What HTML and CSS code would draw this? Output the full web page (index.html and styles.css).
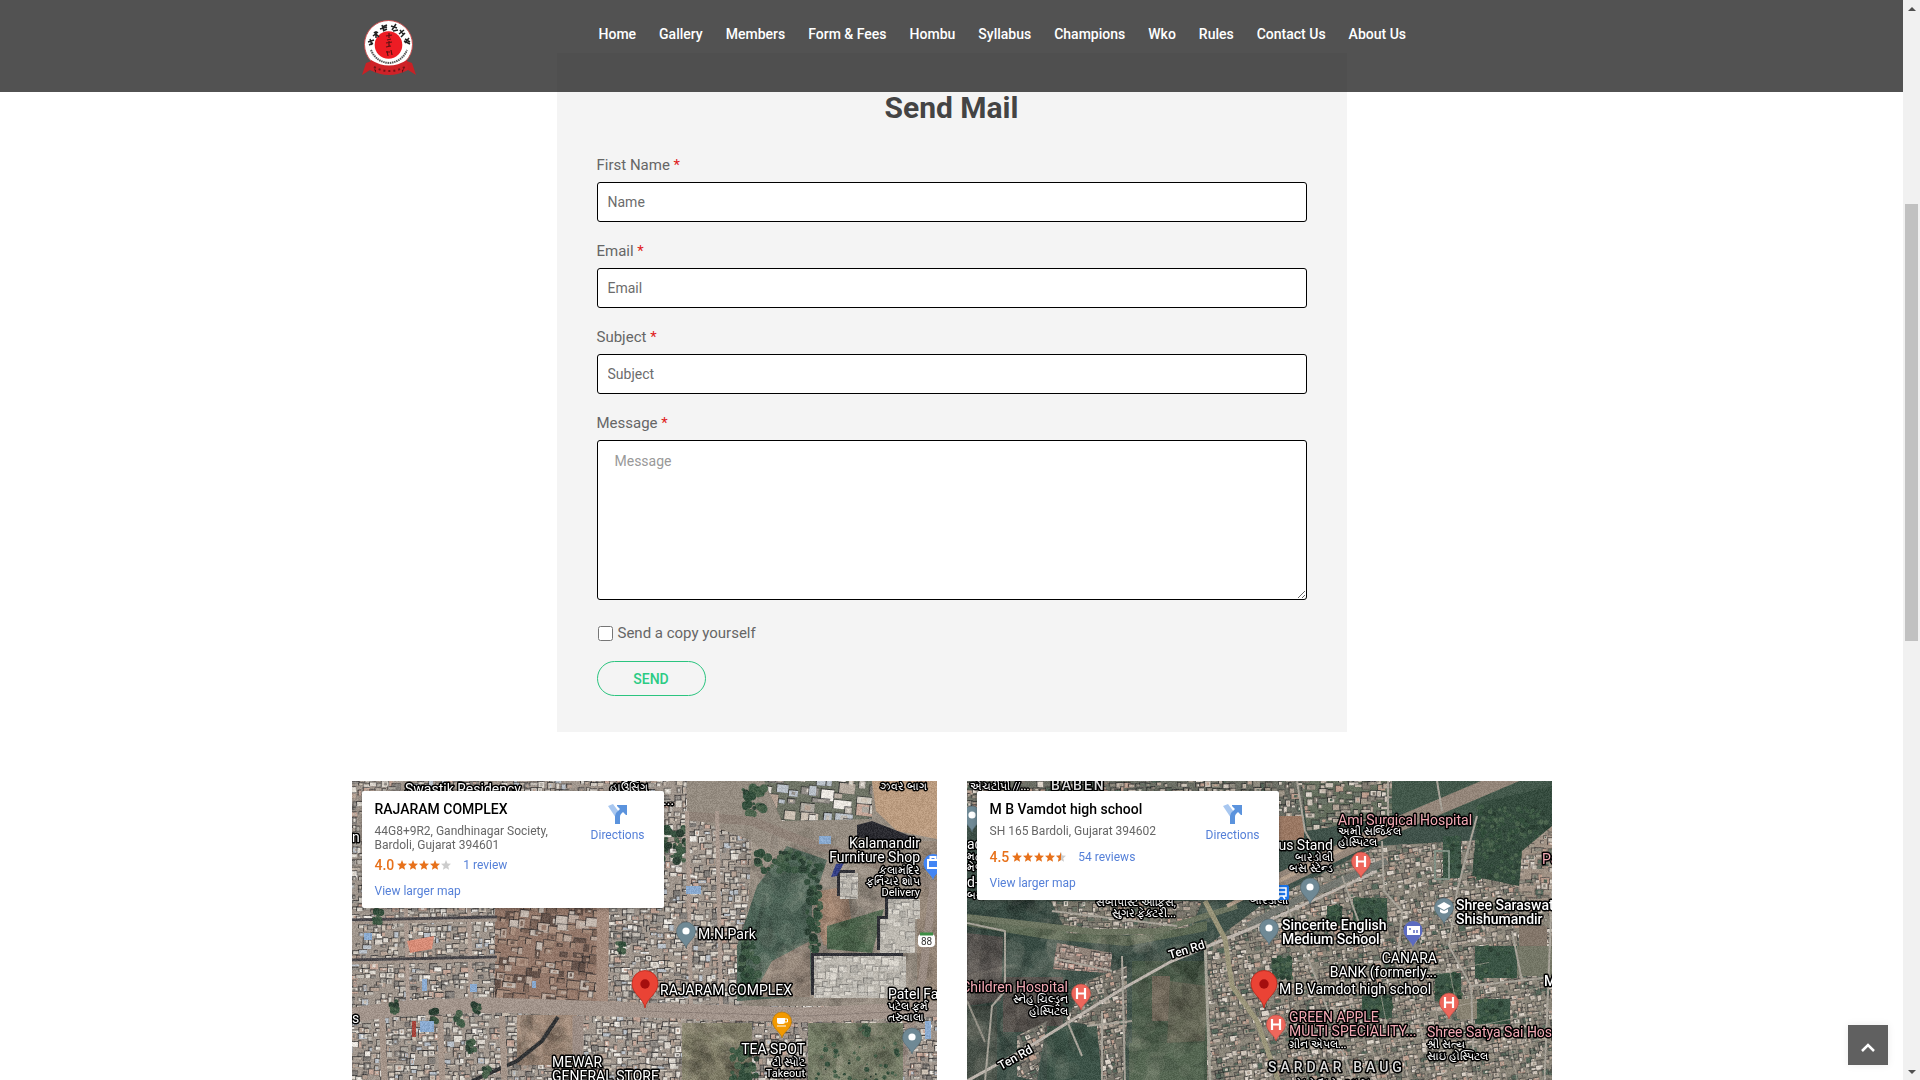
FILE: index.html
```html
<!DOCTYPE html>
<html lang="en">
<head>
<meta charset="utf-8">
<meta name="viewport" content="width=device-width, initial-scale=1">
<title>Contact Us</title>
<link rel="stylesheet" href="styles.css">
</head>
<body>
<svg class="defs" aria-hidden="true">
  <defs>
    <path id="drop" d="M0 0C-1.500-6-9.500-9.500-9.500-16.500A9.500 9.500 0 0 1 9.500-16.500C9.500-9.500 1.500-6 0 0Z"/>
    <g id="pin-dot"><use href="#drop" fill="#6f8995" stroke="#51646d" stroke-width=".6"/><circle cy="-17" r="3.600" fill="#fff"/></g>
    <g id="pin-hospital"><use href="#drop" fill="#ee675c" stroke="#b8463d" stroke-width=".6"/><path d="M-4-22V-11M4-22V-11M-4-16.500H4" stroke="#fff" stroke-width="2.200"/></g>
    <g id="pin-main"><path d="M0 0C-1.500-10-13-14-13-24.500A13 13 0 0 1 13-24.500C13-14 1.500-10 0 0Z" fill="#ea4335" stroke="#b9281c" stroke-width=".8"/><circle cy="-24" r="4.700" fill="#a50e0e"/></g>
    <path id="star" d="M5 0L6.400 3.500L10 3.800L7.200 6.200L8.100 9.800L5 7.900L1.900 9.800L2.800 6.200L0 3.800L3.600 3.500Z"/>
    <g id="directions"><path d="M0 2L5 0L11 8L8 14Z" fill="#a8c7f0"/><path d="M7 20V12Q7 9 10 7L12 5L9 2V1H19V11H18L15 8L13 10Q12 11 12 13V20Z" fill="#5b93dd"/></g>
  </defs>
</svg>
<div class="window">
  <div class="page">
    <header class="site-header">
      <div class="header-inner">
        <a class="logo" href="#" aria-label="Karate club home">
          <svg width="54" height="60" viewBox="0 0 54 60">
            <path d="M0 57L4 45L15 41L15 53L8 52Z M54 57L50 45L39 41L39 53L46 52Z" fill="#c92125"/>
            <circle cx="26.500" cy="26.500" r="24" fill="#fff" stroke="#c94c4c" stroke-width="1"/>
            <circle cx="26.500" cy="27" r="13.800" fill="#ed1c24"/>
            <path d="M9 42Q27 53 45 42L46 52Q27 62 8 52Z" fill="#cf2228"/>
            <path d="M27 15V20M24 18L30 17M25 22L29 21M24 25L30 24M27 23V29M24 29L29 28M25 33L26 38M29 32L30 37M24 34H28" stroke="#5c1212" stroke-width="1.200" fill="none"/>
            <path d="M6 24L12 22M8 21L10 27M7 27L11 25M12 14L17 19M11 18L16 14M14 13L14 20M20 7L22 13M18 11L25 9M20 9L25 7M21 13L25 11M29 8L35 10M30 12L34 6M31 13L36 12M38 12L42 17M37 16L42 12M39 19L43 15M43 21L48 24M43 25L47 20M42 23L48 26" stroke="#222" stroke-width="1.500" fill="none"/>
            <path d="M9 32Q14 44 27 45Q40 44 45 32" fill="none" stroke="#555" stroke-width="2" stroke-dasharray="1.500 .7"/>
            <path d="M12 49Q27 57 43 49" fill="none" stroke="#701417" stroke-width="2" stroke-dasharray="2 3"/>
            <path d="M12 51L14 55V52ZM42 51L40 55V52Z" fill="#5a0f11"/>
          </svg>
        </a>
        <nav class="menu" aria-label="Main">
          <a href="#">Home</a><a href="#">Gallery</a><a href="#">Members</a><a href="#">Form &amp; Fees</a><a href="#">Hombu</a><a href="#">Syllabus</a><a href="#">Champions</a><a href="#">Wko</a><a href="#">Rules</a><a href="#">Contact Us</a><a href="#">About Us</a>
        </nav>
      </div>
    </header>
    <main>
      <form class="mail-form">
        <h2>Send Mail</h2>
        <div class="field"><label for="name">First Name <span class="req">*</span></label><input id="name" type="text" placeholder="Name"></div>
        <div class="field"><label for="email">Email <span class="req">*</span></label><input id="email" type="email" placeholder="Email"></div>
        <div class="field"><label for="subject">Subject <span class="req">*</span></label><input id="subject" type="text" placeholder="Subject"></div>
        <div class="field"><label for="message">Message <span class="req">*</span></label><textarea id="message" placeholder="Message"></textarea></div>
        <div class="copy"><input id="copy" type="checkbox"><label for="copy">Send a copy yourself</label></div>
        <button class="send" type="button">SEND</button>
      </form>
      <div class="maps">
        <section class="map" aria-label="Rajaram Complex map">
          <canvas class="terrain" id="town" width="585" height="450"></canvas>
          <svg class="labels" viewBox="0 0 585 450" preserveAspectRatio="xMidYMin slice">
            <text x="53" y="13">Swastik Residency</text>
            <text class="local" x="258" y="10">હાઉસિંગ</text>
            <text x="311" y="24">...</text>
            <text class="local end" x="575" y="9">ઝવર બાગ</text>
            <text x="0" y="61">n</text><text x="0" y="242">s</text>
            <text class="end" x="568" y="67">Kalamandir</text>
            <text class="end" x="568" y="81">Furniture Shop</text>
            <text class="local end" x="568" y="93">કલામંદિર</text>
            <text class="local end" x="568" y="104">ફર્નિચર શોપ</text>
            <text class="local end" x="568" y="115">Delivery</text>
            <text x="346" y="158">M.N.Park</text>
            <text x="308" y="214">RAJARAM COMPLEX</text>
            <text x="536" y="218">Patel Farm</text>
            <text class="local" x="536" y="229">પટેલ ફર્મ</text>
            <text class="local" x="536" y="240">તરુવાલા</text>
            <text class="end" x="453" y="273">TEA SPOT</text>
            <text class="local end" x="453" y="285">ટી સ્પોટ</text>
            <text class="local end" x="453" y="296">Takeout</text>
            <text x="200" y="286">MEWAR</text><text x="200" y="300">GENERAL STORE</text>
            <use href="#pin-dot" x="334" y="167"/><use href="#pin-dot" x="560" y="273"/>
            <g transform="translate(581 99)"><use href="#drop" fill="#4285f4"/><path d="M-5-20H5V-12H-5ZM-2.500-20V-23H2.500V-20" fill="none" stroke="#fff" stroke-width="2"/></g>
            <g transform="translate(430 257)"><use href="#drop" fill="#f29900" stroke="#ad7008" stroke-width=".6"/><path d="M-5-20H3V-16Q3-14 1-14H-3Q-5-14-5-16Z" fill="#fff"/><path d="M3-19H5.500V-16H3M-5-12H4" fill="none" stroke="#fff"/></g>
            <rect x="566" y="153" width="17" height="13" rx="4" fill="#fff"/><path d="M568 153H581" stroke="#3c8d45" stroke-width="3"/>
            <text class="route" x="569" y="164">88</text>
            <use href="#pin-main" x="293" y="227"/>
          </svg>
          <div class="place">
            <div class="place-info"><h3>RAJARAM COMPLEX</h3><p>44G8+9R2, Gandhinagar Society,<br>Bardoli, Gujarat 394601</p>
              <div class="rating"><span>4.0</span><svg width="56" height="10" viewBox="0 0 56 10" fill="#e7711b"><use href="#star"/><use href="#star" x="11"/><use href="#star" x="22"/><use href="#star" x="33"/><use href="#star" x="44" fill="#ccc"/></svg><a href="#">1 review</a></div>
              <a class="larger" href="#">View larger map</a></div>
            <a class="directions" href="#"><svg width="20" height="20" viewBox="0 0 20 20"><use href="#directions"/></svg>Directions</a>
          </div>
        </section>
        <section class="map" aria-label="M B Vamdot high school map">
          <canvas class="terrain" id="fields" width="585" height="450"></canvas>
          <svg class="labels" viewBox="0 0 585 450" preserveAspectRatio="xMidYMin slice">
            <text class="local" x="3" y="9">એચટીપી //...</text>
            <text class="area" x="84" y="9">BABEN</text>
            <use href="#pin-dot" x="5" y="51"/>
            <text x="0" y="68">ad</text><text class="local" x="0" y="79">મહ</text><text class="local" x="0" y="90">મેળ</text><text x="0" y="106">d-</text><text class="local" x="0" y="118">બસ</text>
            <text class="local end" x="209" y="125">સબીપીસ્ટ ઓફિસ,</text>
            <text class="local end" x="209" y="136">સુગર ફેક્ટરી...</text>
            <text class="road" transform="translate(203 178) rotate(-17)">Ten Rd</text>
            <text class="road" transform="translate(34 289) rotate(-29)">Ten Rd</text>
            <text class="pink end" x="101" y="211">Children Hospital</text>
            <text class="local end" x="101" y="222">સ્નેહ ચિલ્ડ્રન</text>
            <text class="local end" x="101" y="234">હોસ્પિટલ</text>
            <text class="pink" x="371" y="44">Ami Surgical Hospital</text>
            <text class="local" x="371" y="54">અમી સર્જિકલ</text>
            <text class="local" x="371" y="65">હોસ્પિટલ</text>
            <text class="end" x="366" y="69">Bus Stand</text>
            <text class="local end" x="366" y="80">બારડોલી</text>
            <text class="local end" x="366" y="91">બસ સ્ટેન્ડ</text>
            <text class="local" x="283" y="123">બારડોલી</text>
            <text class="pink" x="575" y="83">Pa</text>
            <text class="strong" x="489" y="129">Shree Saraswati</text><text class="strong" x="489" y="143">Shishumandir</text>
            <text class="strong" x="315" y="149">Sincerite English</text><text class="strong" x="315" y="163">Medium School</text>
            <text class="end" x="470" y="182">CANARA</text><text class="end" x="470" y="196">BANK (formerly...</text>
            <text x="312" y="213">M B Vamdot high school</text>
            <text class="pink" x="322" y="241">GREEN APPLE</text><text class="pink" x="322" y="255">MULTI SPECIALITY...</text>
            <text class="local" x="322" y="267">ગ્રીન એપલ...</text>
            <text class="pink" x="460" y="256">Shree Satya Sai Hospital</text>
            <text class="local" x="460" y="267">શ્રી સત્ય</text><text class="local" x="460" y="279">સાઇ હોસ્પિટલ</text>
            <text class="strong" x="577" y="205">Mo</text>
            <text class="area wide" x="301" y="291">SARDAR BAUG</text>
            <text class="area" x="328" y="307">સરદાર બાગ</text>
            <rect x="305" y="104" width="17" height="15" rx="2" fill="#1a73e8"/><path d="M310 107H319V115H310ZM310 111H319M311 118L313 115M318 118L316 115" fill="none" stroke="#fff" stroke-width="1.500"/>
            <use href="#pin-dot" x="343" y="123"/><use href="#pin-dot" x="302" y="164"/>
            <use href="#pin-hospital" x="394" y="97"/><use href="#pin-hospital" x="114" y="229"/><use href="#pin-hospital" x="309" y="260"/><use href="#pin-hospital" x="482" y="238"/>
            <g transform="translate(477 143)"><use href="#drop" fill="#6f8995" stroke="#51646d" stroke-width=".6"/><path d="M-7-18L0-22L7-18L0-14ZM-4-15V-12Q0-9 4-12V-15L0-13Z" fill="#fff"/></g>
            <g transform="translate(446 166)"><use href="#drop" fill="#5c6bc0"/><path d="M-6-21H7V-12H-6Z" fill="#fff"/><path d="M-4-18H-2M1-17V-14M4-17V-14" stroke="#5c6bc0" stroke-width="1.500"/></g>
            <use href="#pin-main" x="297" y="227"/>
          </svg>
          <div class="place">
            <div class="place-info"><h3>M B Vamdot high school</h3><p class="single">SH 165 Bardoli, Gujarat 394602</p>
              <div class="rating"><span>4.5</span><svg width="56" height="10" viewBox="0 0 56 10" fill="#e7711b"><use href="#star"/><use href="#star" x="11"/><use href="#star" x="22"/><use href="#star" x="33"/><use href="#star" x="44" fill="#ccc"/><path d="M49 0V7.900L45.900 9.800L46.800 6.200L44 3.800L47.600 3.500Z"/></svg><a href="#">54 reviews</a></div>
              <a class="larger" href="#">View larger map</a></div>
            <a class="directions" href="#"><svg width="20" height="20" viewBox="0 0 20 20"><use href="#directions"/></svg>Directions</a>
          </div>
        </section>
      </div>
    </main>
    <button class="to-top" type="button" aria-label="Back to top"><svg width="14" height="10" viewBox="0 0 14 10"><path d="M1 8L7 2L13 8" fill="none" stroke="#fff" stroke-width="2.500"/></svg></button>
  </div>
  <div class="scrollbar" aria-hidden="true"><i class="arrow up"></i><i class="thumb"></i><i class="arrow down"></i></div>
</div>
<script src="terrain.js"></script>
</body>
</html>
```
FILE: styles.css
```css
* { box-sizing: border-box; }
body { margin: 0; font-family: Roboto, "Noto Sans", sans-serif; color: #666; background: #fff; }
h2, h3, p { margin: 0; }
a { text-decoration: none; }
input, textarea, button { font-family: inherit; }
.defs { display: block; width: 0; height: 0; }
.window { display: grid; grid-template-columns: minmax(0, 1fr) 17px; height: 100vh; }
.page { position: relative; overflow: hidden; }

.site-header { position: absolute; z-index: 5; top: 0; left: 0; right: 0; height: 92px; background: rgba(24, 24, 24, .75); }
.header-inner { display: flex; align-items: flex-start; max-width: 1200px; margin: 0 auto; }
.logo { margin: 18px 183px 0 10px; line-height: 0; }
.menu { display: flex; gap: 23px; padding-top: 24px; }
.menu a { color: #fff; font-size: 14px; font-weight: 500; line-height: 20px; white-space: nowrap; }

main { padding-top: 53px; }
.mail-form { max-width: 790px; margin: 0 auto; padding: 40px 40px 36px; background: #f4f4f4; }
.mail-form h2 { margin-bottom: 32px; font-size: 30px; line-height: 30px; font-weight: 700; text-align: center; color: #444; }
.field { margin-bottom: 19px; }
.field label { display: block; margin-bottom: 7px; font-size: 15px; line-height: 20px; }
.req { color: #e02020; }
.field input, .field textarea { display: block; width: 100%; border: 1px solid #000; border-radius: 3px; background: #fff; font-size: 14px; line-height: 20px; }
.field input { height: 40px; padding: 0 10px; }
.field textarea { height: 160px; padding: 10px 17px; resize: vertical; }
.field input::placeholder { color: #6c6c6c; }
.field textarea::placeholder { color: #999; }
.copy { display: flex; align-items: center; gap: 5px; margin: 23px 0 18px; font-size: 15px; line-height: 20px; }
.copy input { width: 15px; height: 15px; margin: 0 0 0 1px; }
.send { display: block; width: 109px; height: 35px; padding: 0; border: 1px solid #2bc47f; border-radius: 18px; background: transparent; color: #2ccb84; font-size: 14px; font-weight: 500; }

.maps { display: grid; grid-template-columns: 1fr 1fr; gap: 30px; max-width: 1200px; margin: 49px auto 0; }
.map { position: relative; height: 450px; overflow: hidden; }
.terrain, .labels { position: absolute; top: 0; left: 0; width: 100%; height: 100%; }
.terrain { object-fit: cover; object-position: top; }
.labels text { fill: #fff; stroke: #000; stroke-width: 3px; stroke-linejoin: round; paint-order: stroke; font-size: 14px; }
.labels .local { font-size: 11px; }
.labels .end { text-anchor: end; }
.labels .pink { fill: #f3a9b4; }
.labels .strong { font-weight: 500; }
.labels .road { font-size: 12px; font-weight: 500; }
.labels .area { font-weight: 500; letter-spacing: 2px; fill: #ddd; }
.labels .wide { letter-spacing: 4px; }
.labels .route { font-size: 10px; stroke: none; fill: #333; }
.place { position: absolute; top: 10px; left: 10px; display: flex; justify-content: space-between; width: 302px; padding: 9px 19px 10px 13px; border-radius: 2px; background: #fff; font-size: 12px; line-height: 14px; box-shadow: 0 1px 4px rgba(0, 0, 0, .3); }
.place h3 { margin-bottom: 6px; font-size: 14px; line-height: 18px; font-weight: 500; color: #000; }
.place p { color: #666; }
.place .single { margin-bottom: 11px; }
.place a { color: #5580d8; }
.rating { display: flex; align-items: center; height: 16px; margin: 5px 0 11px; }
.rating span { font-size: 14px; font-weight: 500; color: #e7711b; margin-right: 3px; }
.rating a { margin-left: 10px; }
.place .larger { display: block; }
.place .directions { display: flex; flex-direction: column; align-items: center; gap: 4px; padding-top: 4px; }

.to-top { position: absolute; z-index: 6; right: 15px; bottom: 15px; display: grid; place-items: center; width: 40px; height: 40px; padding: 6px 0 0; border: 0; background: #606060; box-shadow: 0 0 8px rgba(0, 0, 0, .08); }
.scrollbar { display: grid; grid-template-rows: 17px 187fr 437fr 422fr 17px; justify-items: center; background: #f1f1f1; }
.thumb { grid-row: 3; width: 13px; background: #c1c1c1; }
.arrow { align-self: center; width: 0; height: 0; border: 4px solid transparent; border-top-width: 0; border-bottom: 4px solid #505050; }
.down { grid-row: 5; border-width: 4px 4px 0; border-color: #505050 transparent transparent; }
```
FILE: terrain.js
```js
// Paints the satellite imagery behind the map labels.
let seed = 7;
const rnd = () => (seed = (seed * 16807) % 2147483647) / 2147483647;
const pick = list => list[Math.floor(rnd() * list.length)];
const roofs = ['#d3cdc4', '#c0bab2', '#e0dbd3', '#aaa59d', '#b8ada2', '#938e89', '#cbc0b3', '#827e7a', '#ece8e2', '#b3a093', '#b9c0c8', '#c4a698', '#d8d2ca'];
const brown = ['#96796a', '#a98e7e', '#7d665a', '#b9a79b', '#64524a', '#c3b8af', '#a08676'];
const suburb = ['#bdb2a6', '#a09789', '#cdc4b9', '#8d897e', '#b0a295', '#6a7266', '#dcd4ca', '#7e786f', '#bd9f8f', '#55675a'];

function trace(c, pts) {
  c.beginPath();
  pts.forEach(([x, y], i) => (i ? c.lineTo(x, y) : c.moveTo(x, y)));
}
function area(c, color, pts) {
  trace(c, pts);
  c.closePath();
  c.fillStyle = color;
  c.fill();
}
function road(c, color, width, pts) {
  trace(c, pts);
  c.strokeStyle = color;
  c.lineWidth = width;
  c.lineJoin = 'round';
  c.stroke();
}
function blocks(c, pts, size, palette, ground, angle = 0, shade = 0.45) {
  c.save();
  area(c, ground, pts);
  c.clip();
  c.translate(290, 150);
  c.rotate(angle);
  for (let y = -450; y < 450; y += size) {
    for (let x = -520; x < 520; x += size) {
      if (rnd() < 0.15) continue;
      const w = size * (0.4 + rnd() * 1.1), h = size * (0.3 + rnd() * 0.8);
      const px = x + rnd() * size * 0.6, py = y + rnd() * size * 0.6;
      c.fillStyle = `rgba(36,36,38,${shade + rnd() * 0.3})`;
      c.fillRect(px - 1, py - 1, w + 1, h + 1);
      c.fillStyle = pick(palette);
      c.fillRect(px, py, w, h);
      if (rnd() < 0.5) { c.fillStyle = pick(palette); c.fillRect(px + w * 0.3, py + h * 0.2, w * 0.4, h * 0.5); }
    }
  }
  c.restore();
}
function trees(c, x, y, w, h, n, size = 5) {
  for (let i = 0; i < n; i++) {
    c.fillStyle = pick(['#334e3c', '#3f5a45', '#2c4034', '#4c644e']);
    c.beginPath();
    c.arc(x + rnd() * w, y + rnd() * h, size * (0.3 + rnd() * 0.6), 0, 7);
    c.fill();
  }
}
// Soft light and dark patches, so that open ground is not flat.
function mottle(c, x, y, w, h, n) {
  for (let i = 0; i < n; i++) {
    c.fillStyle = pick(['rgba(255,240,220,.06)', 'rgba(0,0,0,.07)']);
    c.beginPath();
    c.ellipse(x + rnd() * w, y + rnd() * h, 3 + rnd() * 16, 2 + rnd() * 9, rnd() * 3, 0, 7);
    c.fill();
  }
}
function grain(c, amount) {
  const img = c.getImageData(0, 0, 585, 450), d = img.data;
  for (let i = 0; i < d.length; i += 4) {
    const n = (rnd() - 0.5) * amount;
    d[i] += n; d[i + 1] += n; d[i + 2] += n;
  }
  c.putImageData(img, 0, 0);
}
const box = (x, y, w, h) => [[x, y], [x + w, y], [x + w, y + h], [x, y + h]];

const t = document.getElementById('town').getContext('2d');
blocks(t, box(0, 0, 585, 450), 6, roofs, '#a0968d');
blocks(t, box(143, 125, 108, 95), 9, brown, '#94786a', 0.1);
area(t, '#958c81', [[335, 0], [585, 0], [585, 225], [390, 225], [400, 60], [335, 35]]);
blocks(t, [[412, 0], [520, 0], [520, 38], [430, 40]], 12, roofs, '#6f7466', 0.1);
area(t, '#bb9c80', [[520, 0], [585, 0], [585, 58], [545, 50], [524, 30]]);
area(t, '#958678', box(565, 60, 20, 160));
area(t, '#50675a', [[435, 65], [475, 79], [460, 125], [458, 215], [385, 220], [385, 165], [405, 105]]);
area(t, '#8f8175', [[420, 180], [458, 160], [458, 216], [400, 216]]);
area(t, '#a98c78', [[468, 110], [495, 105], [500, 145], [472, 165], [462, 135]]);
area(t, '#4f684f', [[475, 145], [532, 128], [520, 172], [475, 168]]);
mottle(t, 390, 60, 190, 160, 260);
trees(t, 388, 160, 18, 58, 60);
trees(t, 455, 80, 14, 90, 60);
trees(t, 390, 5, 22, 28, 30);
trees(t, 305, 45, 30, 35, 40);
trees(t, 405, 70, 50, 20, 40);
area(t, '#2b2b31', [[505, 44], [520, 40], [566, 58], [566, 68], [505, 56]]);
[[462, 175, 92, 42], [528, 138, 35, 34], [536, 118, 32, 20], [488, 92, 18, 26]].forEach(([x, y, w, h]) => {
  area(t, '#303137', box(x - 3, y - 3, w, h));
  blocks(t, box(x, y, w, h), 7, ['#c4c1ba', '#d0ccc4', '#b0ada6', '#d9d5cd'], '#bdb9b1', 0, 0.1);
});
area(t, '#343f86', [[479, 96], [484, 83], [492, 82], [485, 95]]);
road(t, '#8f8278', 9, [[335, 35], [400, 40], [450, 60], [500, 75], [585, 105]]);
road(t, '#9a8c83', 8, [[582, 100], [570, 200], [545, 300], [520, 450]]);
[52, 115, 335, 365].forEach(x => road(t, '#ab9b91', 4, [[x, 30], [x + 4, 225]]));
[136, 176].forEach(y => { road(t, '#48464a', 3, [[0, y + 3], [145, y]]); road(t, '#a2958b', 3, [[0, y + 6], [145, y + 3]]); });
road(t, '#a48b7d', 12, [[251, 125], [250, 222]]);
area(t, '#89866f', box(330, 242, 70, 62));
area(t, '#788069', box(456, 242, 95, 60));
area(t, '#a08978', box(165, 234, 60, 50));
mottle(t, 330, 242, 70, 60, 80);
mottle(t, 456, 242, 95, 60, 90);
mottle(t, 165, 234, 60, 50, 60);
trees(t, 380, 262, 25, 40, 45);
trees(t, 462, 262, 85, 38, 40, 3);
road(t, '#303234', 4, [[206, 236], [190, 260], [165, 280], [120, 300]]);
road(t, '#9b8c84', 11, [[226, 235], [226, 450]]);
[30, 88, 150].forEach(x => road(t, '#a5958a', 6, [[x, 235], [x + 8, 450]]));
road(t, '#a2948b', 15, [[0, 234], [50, 227], [140, 224], [290, 229], [450, 234], [585, 228]]);
road(t, '#8d8079', 1, [[290, 230], [450, 235], [585, 229]]);
[[22, 130], [265, 160], [38, 220], [78, 230], [102, 232], [120, 222], [115, 260], [130, 285], [508, 244]].forEach(([x, y]) => trees(t, x, y, 8, 12, 12, 4));
area(t, '#d88d78', [[55, 160], [82, 155], [80, 168], [58, 172]]);
area(t, '#a6453c', box(60, 240, 4, 16));
[[12, 152, 8, 7], [70, 198, 5, 12], [118, 203, 7, 8], [68, 240, 14, 11], [180, 200, 4, 7], [334, 105, 15, 8], [467, 55, 12, 8], [573, 240, 6, 18]].forEach(b => area(t, '#8aaad0', box(...b)));
grain(t, 26);

const f = document.getElementById('fields').getContext('2d');
area(f, '#40524a', box(0, 0, 585, 450));
area(f, '#374a42', box(0, 120, 80, 50));
area(f, '#56524f', [[0, 152], [36, 156], [34, 220], [0, 225]]);
area(f, '#524e4a', box(36, 196, 60, 55));
area(f, '#3d5348', box(80, 245, 80, 205));
area(f, '#464f47', box(0, 225, 30, 75));
area(f, '#4b5c4a', box(165, 180, 78, 125));
area(f, '#71695b', box(185, 195, 18, 45));
area(f, '#566753', box(162, 262, 75, 45));
area(f, '#626554', [[203, 200], [240, 205], [238, 260], [200, 262]]);
area(f, '#5d6a55', [[0, 134], [90, 145], [160, 155], [240, 140], [240, 150], [160, 165], [80, 158], [0, 145]]);
mottle(f, 0, 110, 245, 190, 320);
blocks(f, [[240, 165], [300, 120], [410, 65], [585, 55], [585, 450], [240, 450]], 5, suburb, '#8b867a', -0.15, 0.3);
blocks(f, [[84, 120], [235, 120], [225, 145], [175, 154], [100, 152]], 5, suburb, '#7b786c', 0, 0.3);
blocks(f, [[90, 162], [145, 172], [143, 192], [86, 188]], 5, ['#c49e92', '#b4a49a', '#d1c3b8', '#9c877d'], '#92847a', 0.1, 0.3);
blocks(f, [[120, 200], [160, 185], [160, 240], [156, 300], [135, 300], [130, 245], [98, 240]], 5, suburb, '#78756b', -0.2, 0.3);
blocks(f, [[50, 255], [80, 240], [70, 300], [50, 295]], 5, suburb, '#76746c', -0.4, 0.3);
blocks(f, [[0, 0], [340, 0], [330, 70], [0, 30]], 6, suburb, '#6c6f65');
area(f, '#9a7863', box(312, 35, 25, 24));
area(f, '#43584b', [[420, 0], [585, 0], [585, 45], [420, 30]]);
blocks(f, [[335, 0], [425, 0], [425, 35], [340, 50]], 7, suburb, '#66705f');
area(f, '#354b3e', [[512, 22], [585, 5], [585, 62], [552, 105], [505, 95]]);
trees(f, 508, 25, 75, 72, 300, 3);
[[468, 192, 26, 28], [508, 218, 35, 25], [395, 215, 30, 22], [508, 165, 42, 32], [476, 55, 18, 42], [386, 117, 34, 26], [305, 177, 20, 20], [360, 125, 15, 20]].forEach(b => { area(f, '#3b5445', box(...b)); trees(f, ...b, 35, 3); });
area(f, '#83766a', box(552, 145, 28, 22));
area(f, '#888272', box(490, 218, 20, 20));
area(f, '#757767', box(550, 165, 35, 30));
blocks(f, [[555, 70], [585, 45], [585, 135], [552, 110]], 6, suburb, '#a09285', 0, 0.3);
road(f, '#6d7561', 6, [[0, 136], [130, 151], [190, 150], [270, 125]]);
road(f, '#94867a', 15, [[280, 115], [420, 48], [585, -22]]);
road(f, '#b5a18e', 4, [[260, 125], [330, 91], [420, 45]]);
road(f, '#747771', 7, [[280, 145], [330, 119], [420, 80]]);
road(f, '#bdb5ad', 3, [[0, 300], [60, 267], [155, 208], [205, 180], [290, 145], [410, 90]]);
road(f, '#9a957a', 5, [[238, 120], [258, 158], [265, 205], [290, 240], [315, 310]]);
road(f, '#a8a599', 3, [[238, 160], [243, 300]]);
road(f, '#a5a197', 2, [[0, 142], [38, 150], [38, 210], [25, 225], [18, 300]]);
road(f, '#928f85', 2, [[0, 220], [18, 261]]);
[[[415, 60], [417, 110], [435, 130], [430, 190]], [[510, 35], [490, 110], [482, 165], [504, 205], [507, 285]], [[504, 205], [585, 196]], [[318, 120], [350, 200], [390, 310]], [[375, 95], [395, 150]], [[330, 0], [338, 50], [350, 72]], [[421, 0], [421, 40]], [[585, 110], [577, 310]], [[120, 245], [165, 240]], [[100, 240], [115, 275]], [[135, 230], [135, 300]], [[545, 150], [555, 200]], [[470, 0], [475, 30]], [[85, 130], [210, 145]], [[90, 178], [145, 190]], [[155, 175], [158, 300]]].forEach(p => road(f, '#a8a399', 2, p));
for (let i = 0; i < 16; i++) {
  const x = 260 + rnd() * 300, y = 150 + rnd() * 120;
  road(f, 'rgba(185,177,165,.6)', 1, [[x, y], [x + 60, y - 12]]);
  road(f, 'rgba(185,177,165,.6)', 1, [[x, y], [x + 12, y + 60]]);
}
f.strokeStyle = '#7f8f83';
f.lineWidth = 2;
f.strokeRect(468, 70, 14, 28);
grain(f, 22);
```
